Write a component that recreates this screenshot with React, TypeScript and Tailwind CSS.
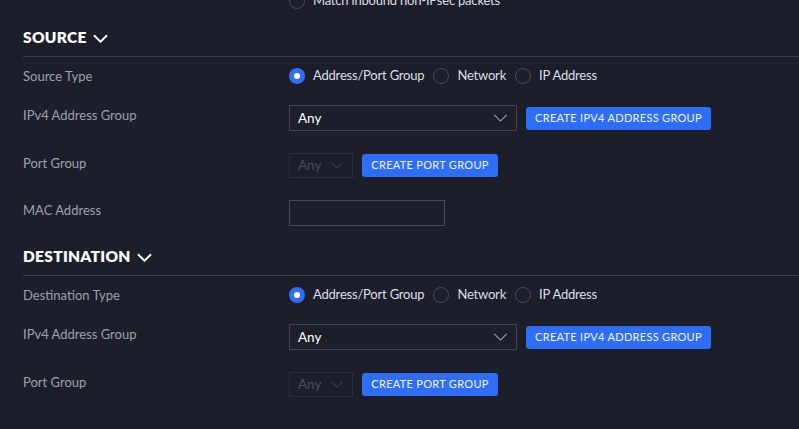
import React from 'react';

function Chevron({ className }: { className?: string }) {
    return (
        <svg viewBox="0 0 16 9" className={className} fill="none" stroke="currentColor" strokeWidth="1.2">
            <path d="M1 1l7 7 7-7" />
        </svg>
    );
}

function Radio({ checked, label }: { checked?: boolean; label: string }) {
    return (
        <label className="flex items-center gap-2">
            {checked ? (
                <span className="w-4 h-4 rounded-full bg-[#2f6ef5] flex items-center justify-center">
                    <span className="w-[6px] h-[6px] rounded-full bg-white" />
                </span>
            ) : (
                <span className="w-4 h-4 rounded-full border border-[#464a56]" />
            )}
            <span className="text-[13px] tracking-[-0.2px] text-[#dcdee3]">{label}</span>
        </label>
    );
}

function SectionHeader({ title, mt }: { title: string; mt: string }) {
    return (
        <div className={`${mt} border-b border-[#3a3e4a] pb-[6px]`}>
            <div className="flex items-center gap-[6px] h-6 text-white">
                <span className="text-[15.5px] font-extrabold tracking-[0.3px]">{title}</span>
                <svg viewBox="0 0 16 9" className="w-[15px] h-[9px]" fill="none" stroke="currentColor" strokeWidth="2">
                    <path d="M1 1l7 7 7-7" />
                </svg>
            </div>
        </div>
    );
}

function Label({ children }: { children: React.ReactNode }) {
    return <div className="w-[266px] shrink-0 text-[13px] leading-5 text-[#9ca1ab]">{children}</div>;
}

function Button({ children, w }: { children: React.ReactNode; w: string }) {
    return (
        <button className={`${w} h-[23px] rounded-[3px] bg-[#2e6ef6] text-[#f2f5ff] text-[11px] font-normal tracking-[0.3px] uppercase`}>
            {children}
        </button>
    );
}

function Section({ title, typeLabel, mt, showMac }: { title: string; typeLabel: string; mt: string; showMac?: boolean }) {
    return (
        <div>
            <SectionHeader title={title} mt={mt} />
            <div className="flex items-center h-[36px] pt-[1px]">
                <Label>{typeLabel}</Label>
                <div className="flex items-center gap-[9px]">
                    <Radio checked label="Address/Port Group" />
                    <Radio label="Network" />
                    <Radio label="IP Address" />
                </div>
            </div>
            <div className="flex items-start mt-[12px]">
                <Label>IPv4 Address Group</Label>
                <div className="flex items-center gap-[9px]">
                    <div className="w-[228px] h-[26px] border border-[#40444f] flex items-center justify-between pl-2 pr-2">
                        <span className="text-[13.5px] text-white">Any</span>
                        <Chevron className="w-[15px] h-[8px] text-[#9ca1ab]" />
                    </div>
                    <Button w="w-[185px]">Create IPv4 Address Group</Button>
                </div>
            </div>
            <div className="flex items-start mt-[22px]">
                <Label>Port Group</Label>
                <div className="flex items-center gap-[9px]">
                    <div className="w-[64px] h-[25px] border border-[#2a2d38] flex items-center justify-between pl-2 pr-2">
                        <span className="text-[13.5px] text-[#4a4e59]">Any</span>
                        <Chevron className="w-[14px] h-[7px] text-[#4a4e59]" />
                    </div>
                    <Button w="w-[136px]">Create Port Group</Button>
                </div>
            </div>
            {showMac && (
                <div className="flex items-start mt-[22px]">
                    <Label>MAC Address</Label>
                    <div className="w-[156px] h-[26px] border border-[#464a55]" />
                </div>
            )}
        </div>
    );
}

export default function App() {
    return (
        <div className="w-[799px] h-[429px] overflow-hidden bg-[#1c1f2a] font-['Lato',sans-serif]">
            <div className="pl-[23px]">
                <div className="flex items-center h-5 -mt-[9px] pl-[266px] gap-2">
                    <span className="w-4 h-4 rounded-full border border-[#464a56]" />
                    <span className="text-[13px] tracking-[-0.2px] text-[#dcdee3]">Match inbound non-IPsec packets</span>
                </div>
                <Section title="SOURCE" typeLabel="Source Type" mt="mt-[15px]" showMac />
                <Section title="DESTINATION" typeLabel="Destination Type" mt="mt-[19px]" />
            </div>
        </div>
    );
}
